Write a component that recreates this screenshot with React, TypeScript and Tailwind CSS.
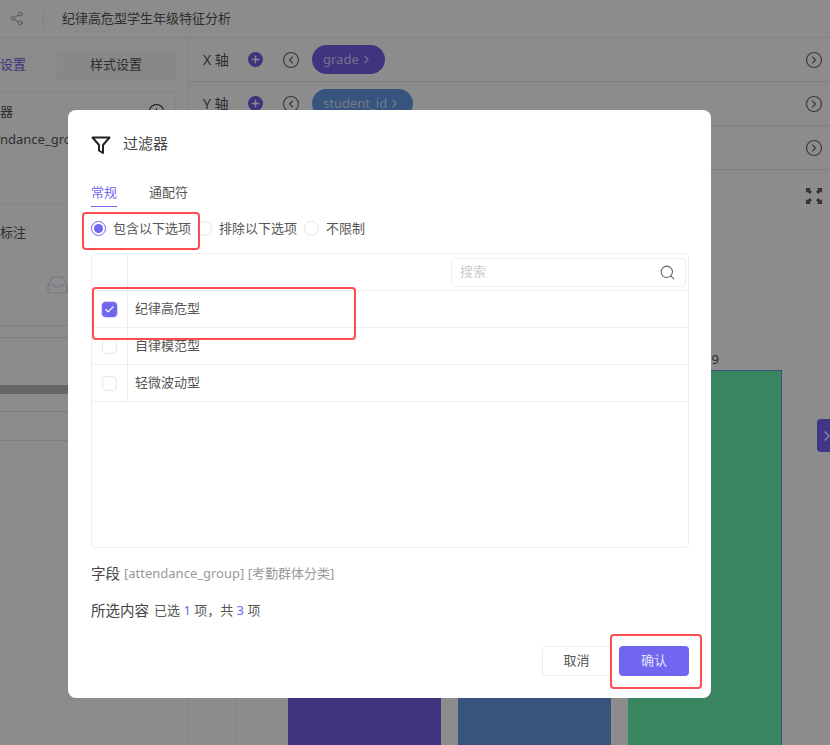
import { ChevronRight, CircleChevronLeft, CircleChevronRight, CirclePlus, Plus, Search, Share2, Check } from "lucide-react";

const font = "font-['Noto_Sans','Noto_Sans_CJK_SC',sans-serif]";

const options = [
  { label: "纪律高危型", checked: true },
  { label: "自律模范型", checked: false },
  { label: "轻微波动型", checked: false },
];

function AxisRow({ label, pill, pillClass }: { label?: string; pill?: string; pillClass?: string }) {
  return (
    <div className="h-11 flex items-center border-b border-[#e8e8e8] pl-[14px] pr-[7px]">
      {label && (
        <>
          <span className="w-[45px] text-[14px] text-[#555]">{label}</span>
          <span className="w-[15px] h-[15px] rounded-full bg-[#6f5fe0] flex items-center justify-center">
            <Plus size={11} strokeWidth={3} className="text-white" />
          </span>
          <CircleChevronLeft size={18} strokeWidth={1.5} className="ml-[19px] text-[#666]" />
          <span className={`ml-[12px] h-[29px] flex items-center rounded-full pl-[11px] pr-[12px] text-[13px] text-white/70 ${pillClass}`}>
            {pill}
            <ChevronRight size={13} className="ml-[1px]" />
          </span>
        </>
      )}
      <CircleChevronRight size={18} strokeWidth={1.5} className="ml-auto text-[#666]" />
    </div>
  );
}

function Background() {
  return (
    <div className="h-[745px] flex flex-col bg-white">
      <div className="h-[38px] shrink-0 flex items-center border-b border-[#eee] pl-[9px] text-[#555]">
        <Share2 size={15} strokeWidth={1.5} className="text-[#999]" />
        <div className="ml-[19px] w-px h-[18px] bg-[#e8e8e8]" />
        <span className="ml-[18px] text-[13px]">纪律高危型学生年级特征分析</span>
      </div>
      <div className="flex-1 flex min-h-0">
        <div className="w-[189px] shrink-0 border-r border-[#eee] overflow-hidden flex flex-col text-[#555]">
          <div className="mt-[12px] h-[30px] flex rounded bg-[#f7f7f7] text-[13px] mr-[12px]">
            <div className="w-[57px] rounded bg-[#fdfdfd] text-[#6f5fe0] flex items-center">设置</div>
            <div className="flex-1 flex items-center pl-[33px]">样式设置</div>
          </div>
          <div className="mt-[12px] h-[112px] border-b border-[#eee] text-[13px]">
            <div className="h-[100px] mr-[12px] border-t border-r border-[#f3f3f3] pt-[9px]">
              <div className="flex items-center">
                <span>器</span>
                <CirclePlus size={17} strokeWidth={1.5} className="ml-auto mr-[10px] text-[#222]" />
              </div>
              <div className="mt-[8px] whitespace-nowrap">ndance_group</div>
            </div>
          </div>
          <div className="mt-[19px] text-[13px]">标注</div>
          <svg className="mt-[32px] ml-[47px] shrink-0" width="21" height="19" viewBox="0 0 21 19" fill="none" stroke="#d5d5f0" strokeWidth="1.2">
            <path d="M1 10 5 2h11l4 8v7a1 1 0 0 1-1 1H2a1 1 0 0 1-1-1zM1 10h6l1 2h5l1-2h6" />
          </svg>
          <div className="mt-[31px] h-px shrink-0 bg-[#e8e8e8]" />
          <div className="mt-[11px] h-px shrink-0 bg-[#e8e8e8]" />
          <div className="mt-[47px] h-[9px] shrink-0 bg-[#bbb]" />
          <div className="mt-[17px] h-px shrink-0 bg-[#e8e8e8]" />
          <div className="mt-[28px] h-px shrink-0 bg-[#e8e8e8]" />
        </div>
        <div className="flex-1 min-w-0 flex flex-col">
          <AxisRow label="X 轴" pill="grade" pillClass="bg-[#7360e8]" />
          <AxisRow label="Y 轴" pill="student_id" pillClass="bg-[#6499e8]" />
          <AxisRow />
          <div className="flex-1 flex min-h-0">
            <div className="w-[48px] border-r border-[#eee]" />
            <div className="flex-1 flex items-end gap-[17px] pl-[51px] pr-[47px]">
              <div className="w-[153px] h-[50px] bg-[#7360e8]" />
              <div className="w-[153px] h-[50px] bg-[#6499e8]" />
              <div className="w-[154px] h-[375px] bg-[#69f2b0] border-t border-r border-[#6499e8] relative">
                <span className="absolute -top-[21px] right-[62px] text-[13px] text-[#555]">9</span>
              </div>
            </div>
          </div>
        </div>
      </div>
    </div>
  );
}

function Radio({ label, on }: { label: string; on?: boolean }) {
  return (
    <label className="flex items-center gap-[7px] text-[13px] text-[#555]">
      <span className={`w-[15px] h-[15px] rounded-full border flex items-center justify-center ${on ? "border-[#7166f0]" : "border-[#e5e5e5]"}`}>
        {on && <span className="w-[9px] h-[9px] rounded-full bg-[#7166f0]" />}
      </span>
      {label}
    </label>
  );
}

function Modal() {
  return (
    <div className="absolute left-[68px] top-[110px] w-[643px] h-[588px] rounded-lg bg-white pl-[23px] pr-[22px] pt-[24px] flex flex-col text-[#555]">
      <div className="flex items-center h-[21px]">
        <svg width="20" height="20" viewBox="0 0 20 20" fill="none" stroke="#222" strokeWidth="2" strokeLinejoin="round">
          <path d="M1.5 2.5h17l-6.5 7.5v8l-4-2.5V10z" />
        </svg>
        <span className="ml-[12px] -mt-[2px] text-[15px] text-[#444]">过滤器</span>
      </div>
      <div className="mt-[28px] flex gap-[32px] text-[13px]">
        <div className="w-[26px] h-[24px] border-b border-[#7166f0] text-[#7166f0] whitespace-nowrap">常规</div>
        <div>通配符</div>
      </div>
      <div className="mt-[14px] flex items-center h-[15px]">
        <Radio label="包含以下选项" on />
        <div className="ml-[6px]"><Radio label="排除以下选项" /></div>
        <div className="ml-[7px]"><Radio label="不限制" /></div>
      </div>
      <div className="mt-[17px] h-[295px] border border-[#efefef] rounded">
        <div className="h-[37px] flex border-b border-[#eee]">
          <div className="w-[36px] border-r border-[#eee]" />
          <div className="flex-1 flex justify-end items-center pr-[2px]">
            <div className="w-[235px] h-[29px] border border-[#eee] rounded flex items-center pl-[8px] pr-[9px]">
              <span className="text-[13px] text-[#ccc]">搜索</span>
              <Search size={17} strokeWidth={1.5} className="ml-auto text-[#666]" />
            </div>
          </div>
        </div>
        {options.map((o) => (
          <div key={o.label} className="h-[37px] flex border-b border-[#eee]">
            <div className="w-[36px] border-r border-[#eee] flex items-center justify-center">
              {o.checked ? (
                <span className="w-[15px] h-[15px] rounded-sm bg-[#7166f0] ring-1 ring-[#d8d4fb] flex items-center justify-center">
                  <Check size={11} strokeWidth={2.5} className="text-white" />
                </span>
              ) : (
                <span className="w-[15px] h-[15px] rounded-sm border border-[#e8e8e8]" />
              )}
            </div>
            <div className="pl-[7px] flex items-center text-[13px]">{o.label}</div>
          </div>
        ))}
      </div>
      <div className="mt-[16px] flex items-center gap-[4px] h-[20px]">
        <span className="text-[14.5px] text-[#444]">字段</span>
        <span className="text-[13px] text-[#999]">[attendance_group] [考勤群体分类]</span>
      </div>
      <div className="mt-[17px] flex items-center gap-[5px] h-[20px]">
        <span className="text-[14.5px] text-[#444]">所选内容</span>
        <span className="text-[13px] text-[#555] whitespace-pre">
          已选 <span className="text-[#7166f0]">1</span> 项，共 <span className="text-[#7166f0]">3</span> 项
        </span>
      </div>
      <div className="mt-[25px] flex justify-end gap-[8px]">
        <button className="w-[69px] h-[30px] rounded border border-[#eee] text-[13px] text-[#555]">取消</button>
        <button className="w-[70px] h-[30px] rounded bg-[#7166f0] text-[13px] text-white/80">确认</button>
      </div>
    </div>
  );
}

export default function App() {
  return (
    <div className={`relative w-[830px] h-[745px] overflow-hidden ${font}`}>
      <Background />
      {/* Mask */}
      <div className="absolute inset-0 bg-black/45" />

      {/* Icons left in the dimmed page */}
      <svg className="absolute left-[806px] top-[188px]" width="16" height="16" viewBox="0 0 16 16" fill="#333">
        <path d="M0 0h5L3.6 1.4 6 3.8 3.8 6 1.4 3.6 0 5zM16 0v5l-1.4-1.4L12.2 6 10 3.8l2.4-2.4L11 0zM0 16v-5l1.4 1.4L3.8 10 6 12.2l-2.4 2.4L5 16zM16 16h-5l1.4-1.4L10 12.2l2.2-2.2 2.4 2.4L16 11z" />
      </svg>
      <div className="absolute left-[817px] top-[419px] w-[13px] h-[33px] rounded-l bg-[#413585] overflow-hidden flex items-center pl-[2px]">
        <ChevronRight size={16} className="shrink-0 text-white/40" />
      </div>

      <Modal />

      {/* Red marks drawn on the screenshot */}
      <div className="absolute left-[82px] top-[212px] w-[118px] h-[38px] rounded-sm border-2 border-[#ff4d4f]" />
      <div className="absolute left-[92px] top-[287px] w-[264px] h-[53px] rounded-sm border-2 border-[#ff4d4f]" />
      <div className="absolute left-[610px] top-[634px] w-[92px] h-[55px] rounded-sm border-2 border-[#ff4d4f]" />
    </div>
  );
}
